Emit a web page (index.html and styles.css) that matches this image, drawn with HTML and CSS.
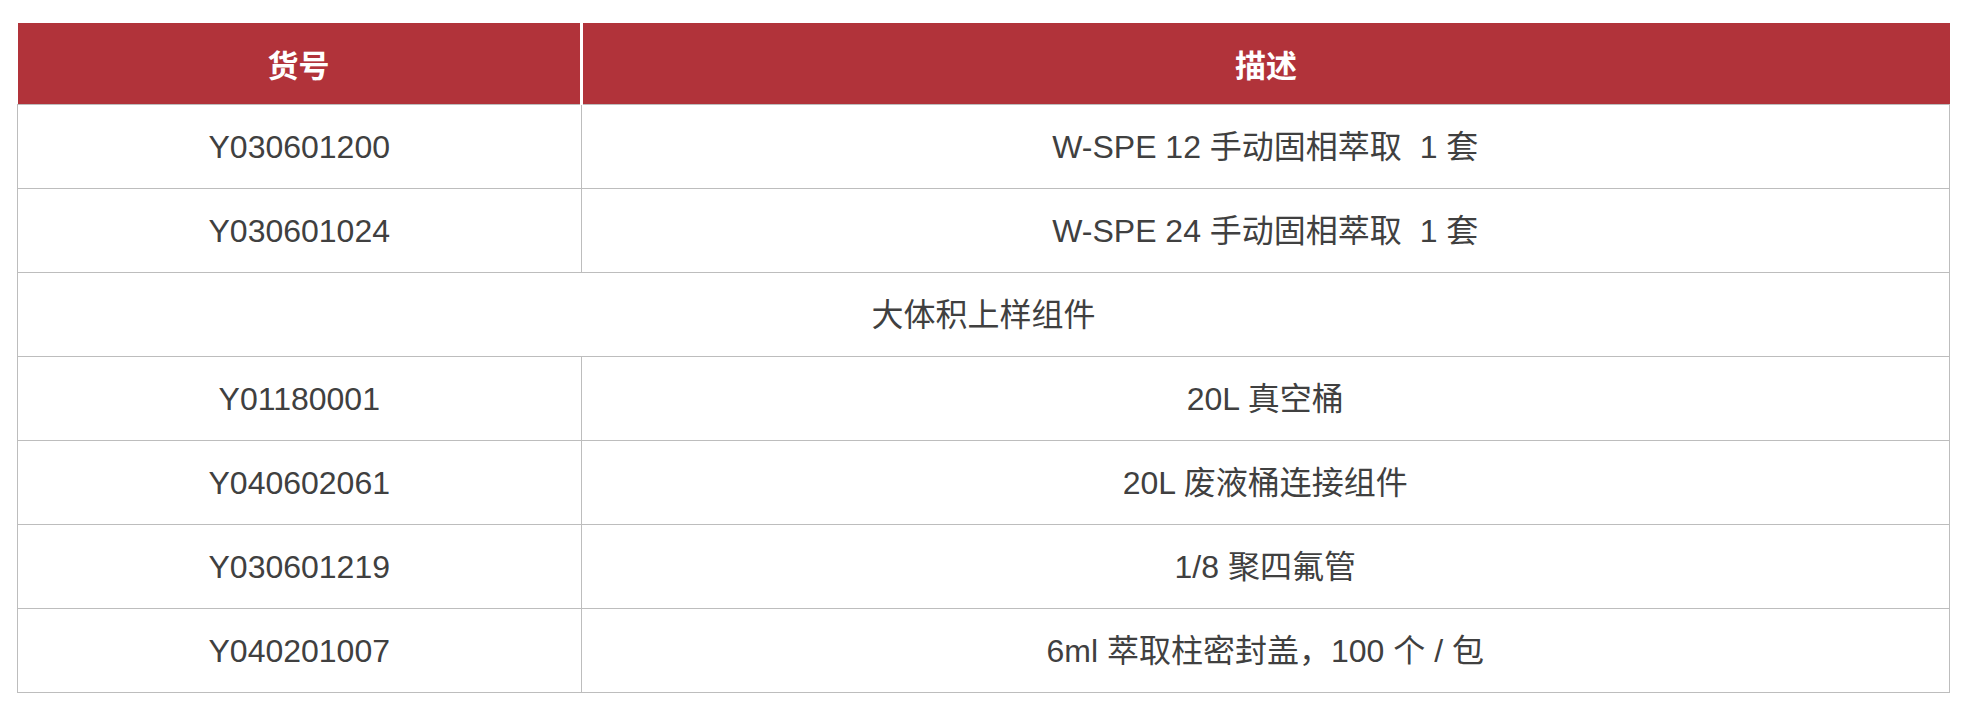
FILE: index.html
```html
<!DOCTYPE html>
<html lang="zh-CN">
<head>
<meta charset="utf-8">
<title>产品列表</title>
<link rel="stylesheet" href="styles.css">
</head>
<body>
<div class="wrap">
<table class="spec">
  <thead>
    <tr>
      <th class="col-code">货号</th>
      <th class="col-desc">描述</th>
    </tr>
  </thead>
  <tbody>
    <tr><td>Y030601200</td><td>W-SPE 12 手动固相萃取&nbsp; 1 套</td></tr>
    <tr><td>Y030601024</td><td>W-SPE 24 手动固相萃取&nbsp; 1 套</td></tr>
    <tr><td colspan="2">大体积上样组件</td></tr>
    <tr><td>Y01180001</td><td>20L 真空桶</td></tr>
    <tr><td>Y040602061</td><td>20L 废液桶连接组件</td></tr>
    <tr><td>Y030601219</td><td>1/8 聚四氟管</td></tr>
    <tr><td>Y040201007</td><td>6ml 萃取柱密封盖，100 个 / 包</td></tr>
  </tbody>
</table>
</div>
</body>
</html>
```
FILE: styles.css
```css
html, body {
  margin: 0;
  padding: 0;
  background: #ffffff;
}

.wrap {
  padding: 23px 26px 0 17px;
}

.spec {
  width: 1933px;
  border-collapse: collapse;
  table-layout: fixed;
  font-family: "Liberation Sans", "Noto Sans CJK SC", sans-serif;
  font-size: 32px;
  color: #404040;
}

.spec th {
  background: #b1333a;
  color: #ffffff;
  font-weight: 700;
  font-family: "Noto Sans CJK SC", sans-serif;
  font-size: 31px;
  height: 81px;
  padding: 0;
  text-align: center;
  vertical-align: middle;
  border: 0;
}

.spec th.col-code {
  width: 562px;
  border-right: 3px solid #ffffff;
}

.spec td {
  height: 83px;
  padding: 0;
  text-align: center;
  vertical-align: middle;
  border: 1px solid #bdbdbd;
  line-height: 1;
}
```
